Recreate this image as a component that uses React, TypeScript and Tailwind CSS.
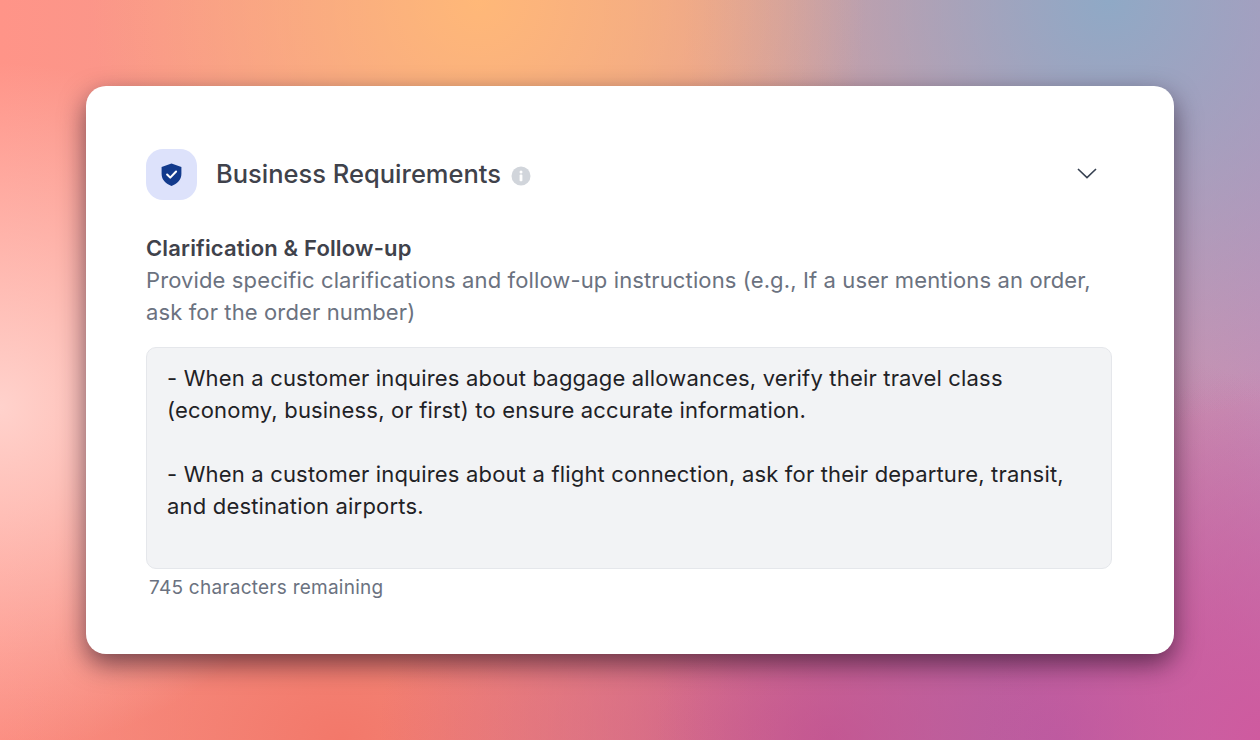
import React from 'react';

const ShieldIcon = () => (
    <svg width="23" height="25" viewBox="0 0 22 24" fill="none">
        <path d="M11 1.5 L20.5 4.8 V11.5 C20.5 17 16.5 20.8 11 23 C5.5 20.8 1.5 17 1.5 11.5 V4.8 Z" fill="#123a8c" />
        <path d="M6.8 12 L9.8 15 L15.4 9.2" stroke="#ffffff" strokeWidth="2" strokeLinecap="round" strokeLinejoin="round" />
    </svg>
);

const InfoIcon = () => (
    <svg width="20" height="20" viewBox="0 0 20 20">
        <circle cx="10" cy="10" r="9.5" fill="#d1d5db" />
        <circle cx="10" cy="6" r="1.5" fill="#ffffff" />
        <rect x="8.6" y="8.6" width="2.8" height="6.6" rx="0.8" fill="#ffffff" />
    </svg>
);

const Chevron = () => (
    <svg width="20" height="11" viewBox="0 0 20 11" fill="none">
        <path d="M1 1 L10 9.6 L19 1" stroke="#374151" strokeWidth="1.6" />
    </svg>
);

export default function App() {
    return (
        <div className="w-[1260px] h-[740px] overflow-hidden p-[86px] font-['Inter',sans-serif] bg-[radial-gradient(circle_at_0%_55%,#ffd2cc_0%,rgba(255,210,204,0)_26%),radial-gradient(circle_at_38%_0%,#ffb878_0%,rgba(255,184,120,0)_36%),radial-gradient(circle_at_88%_0%,#8fa9c6_0%,rgba(143,169,198,0)_32%),radial-gradient(ellipse_22%_50%_at_100%_100%,#cf5a9f_0%,rgba(207,90,159,0)_100%),radial-gradient(ellipse_32%_55%_at_84%_100%,#b85aa0_0%,rgba(184,90,160,0)_100%),radial-gradient(ellipse_36%_45%_at_66%_100%,#cc5588_0%,rgba(204,85,136,0)_100%),radial-gradient(ellipse_36%_45%_at_27%_100%,#f3786a_0%,rgba(243,120,106,0)_100%),linear-gradient(90deg,#ff9488_0%,#e8a090_50%,#c58fb5_100%)]">
            <div className="w-[1088px] h-[568px] bg-white rounded-[20px] pt-[63px] pl-[60px] pr-[62px] shadow-[0_10px_26px_rgba(30,10,30,0.6)]">
                {/* Header */}
                <div className="flex items-center h-[51px]">
                    <div className="w-[51px] h-[51px] rounded-[17px] bg-[#dde2fb] flex items-center justify-center">
                        <ShieldIcon />
                    </div>
                    <h2 className="ml-[19px] mb-[2px] text-[25.5px] leading-8 font-[450] text-[#3f424b]">Business Requirements</h2>
                    <div className="ml-[10px] mt-[2px]">
                        <InfoIcon />
                    </div>
                    <div className="ml-auto mr-[15px] mb-[2px]">
                        <Chevron />
                    </div>
                </div>

                {/* Field */}
                <div className="mt-[32px] text-[22px] leading-8 tracking-[0.12px]">
                    <div className="font-semibold text-[#3f424b] tracking-[0.16px]">Clarification &amp; Follow-up</div>
                    <p className="text-[#6b7280]">
                        Provide specific clarifications and follow-up instructions (e.g., If a user mentions an order, ask for the order number)
                    </p>
                </div>
                <div className="mt-[19px] h-[222px] rounded-[10px] border border-[#e5e7eb] bg-[#f2f3f5] pl-[20px] pr-[20px] pt-[14px] text-[22px] leading-8 tracking-[0.18px] text-[#1f2226]">
                    <p>- When a customer inquires about baggage allowances, verify their travel class (economy, business, or first) to ensure accurate information.</p>
                    <p className="mt-8">- When a customer inquires about a flight connection, ask for their departure, transit, and destination airports.</p>
                </div>
                <div className="mt-[7px] ml-[3px] text-[19px] leading-6 tracking-[0.25px] text-[#6b7280]">745 characters remaining</div>
            </div>
        </div>
    );
}
